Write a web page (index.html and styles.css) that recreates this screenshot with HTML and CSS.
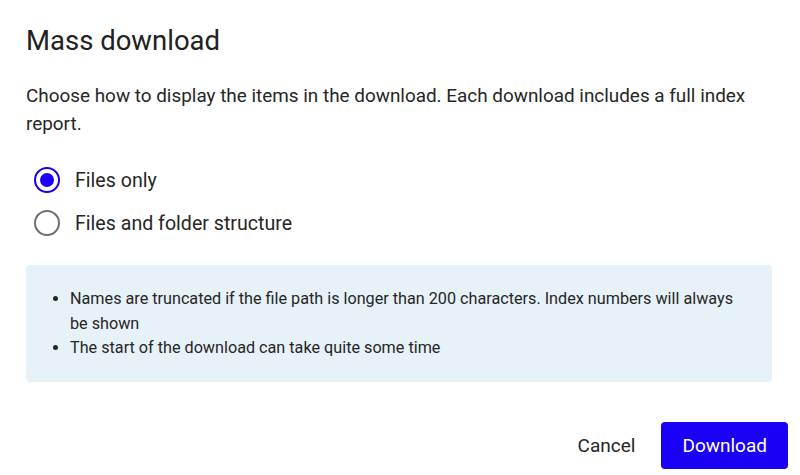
FILE: index.html
```html
<!DOCTYPE html>
<html>
<head>
<meta charset="utf-8">
<title>Mass download</title>
<link rel="stylesheet" href="styles.css">
</head>
<body>

   <div class="dialog">

      <h2 class="dialog-title">Mass download</h2>

      <p class="dialog-text">Choose how to display the items in the download. Each download includes a full index report.</p>

      <!-- display mode choice -->
      <div class="choice-list">
         <label class="choice">
            <input type="radio" name="mode" checked>
            <span class="choice-mark"></span>
            Files only
         </label>
         <label class="choice">
            <input type="radio" name="mode">
            <span class="choice-mark"></span>
            Files and folder structure
         </label>
      </div>

      <div class="notice">
         <ul>
            <li>Names are truncated if the file path is longer than 200 characters. Index numbers will always be shown</li>
            <li>The start of the download can take quite some time</li>
         </ul>
      </div>

      <div class="dialog-actions">
         <button class="btn btn-text">Cancel</button>
         <button class="btn btn-primary">Download</button>
      </div>

   </div>

</body>
</html>
```

FILE: styles.css
```css
body
{
   margin: 0 ;
   background: #ffffff ;
   font-family: Roboto, "Liberation Sans", sans-serif ;
   color: #212121 ;
}

.dialog
{
   padding: 24px 12px 0 26px ;
}

.dialog-title
{
   margin: 0 ;
   font-size: 27.5px ;
   font-weight: 400 ;
   line-height: 34px ;
   color: #212121 ;
}

.dialog-text
{
   margin: 24px 30px 0 0 ;
   font-size: 18.9px ;
   line-height: 28px ;
   color: #262626 ;
}

.choice-list
{
   display: flex ;
   flex-direction: column ;
   gap: 11px ;
   margin-top: 26px ;
   padding-left: 8px ;
}

.choice
{
   display: flex ;
   align-items: center ;
   gap: 15px ;
   height: 32px ;
   font-size: 19.6px ;
   color: #262626 ;
   cursor: pointer ;
}

.choice input
{
   display: none ;
}

.choice-mark
{
   box-sizing: border-box ;
   width: 26px ;
   height: 26px ;
   border: 2px solid #6f6f6f ;
   border-radius: 50% ;
   display: flex ;
   align-items: center ;
   justify-content: center ;
}

.choice input:checked + .choice-mark
{
   border-color: #1a00f5 ;
}

.choice input:checked + .choice-mark::after
{
   content: "" ;
   width: 14px ;
   height: 14px ;
   border-radius: 50% ;
   background: #1a00f5 ;
}

.notice
{
   margin: 26px 16px 0 0 ;
   padding: 22px 24px 21px 0 ;
   background: #e6f1f8 ;
   border-radius: 4px ;
   font-size: 16.2px ;
   line-height: 24.5px ;
   color: #262626 ;
}

.notice ul
{
   margin: 0 ;
   padding-left: 44px ;
}

.dialog-actions
{
   display: flex ;
   justify-content: flex-end ;
   align-items: center ;
   gap: 10px ;
   margin-top: 40px ;
}

.btn
{
   font-family: inherit ;
   font-size: 19px ;
   height: 47px ;
   border: none ;
   border-radius: 4px ;
   cursor: pointer ;
}

.btn-text
{
   background: none ;
   color: #262626 ;
   padding: 0 16px ;
}

.btn-primary
{
   background: #1a00f5 ;
   color: #ffffff ;
   padding: 0 21px ;
}
```
